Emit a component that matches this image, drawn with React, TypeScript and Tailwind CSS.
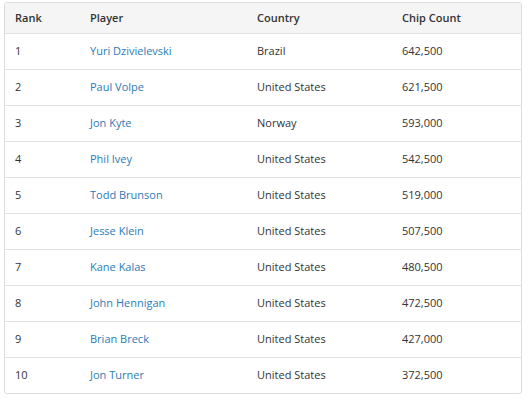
const rows = [
  ["1", "Yuri Dzivielevski", "Brazil", "642,500"],
  ["2", "Paul Volpe", "United States", "621,500"],
  ["3", "Jon Kyte", "Norway", "593,000"],
  ["4", "Phil Ivey", "United States", "542,500"],
  ["5", "Todd Brunson", "United States", "519,000"],
  ["6", "Jesse Klein", "United States", "507,500"],
  ["7", "Kane Kalas", "United States", "480,500"],
  ["8", "John Hennigan", "United States", "472,500"],
  ["9", "Brian Breck", "United States", "427,000"],
  ["10", "Jon Turner", "United States", "372,500"],
];

export default function App() {
  return (
    <div className="bg-white pl-[4px] pr-[6px] pt-[2px] font-['Open_Sans',sans-serif] text-[11px] text-[#333]">
      <div className="overflow-hidden rounded-[3px] border border-[#dcdcdc]">
        <table className="w-full table-fixed border-collapse">
          <colgroup>
            <col className="w-[75px]" />
            <col className="w-[167px]" />
            <col className="w-[145px]" />
            <col />
          </colgroup>
          <thead>
            <tr className="h-[30px] bg-[#f5f5f5] text-left">
              <th className="pl-[10px] font-semibold">Rank</th>
              <th className="pl-[10px] font-semibold">Player</th>
              <th className="pl-[10px] font-semibold">Country</th>
              <th className="pl-[10px] font-semibold">Chip Count</th>
            </tr>
          </thead>
          <tbody>
            {rows.map((r) => (
              <tr key={r[0]} className="h-[36px] border-t border-[#e3e3e3]">
                <td className="pl-[10px]">{r[0]}</td>
                <td className="pl-[10px] text-[#2c7bb6]">{r[1]}</td>
                <td className="pl-[10px]">{r[2]}</td>
                <td className="pl-[10px]">{r[3]}</td>
              </tr>
            ))}
          </tbody>
        </table>
      </div>
    </div>
  );
}
